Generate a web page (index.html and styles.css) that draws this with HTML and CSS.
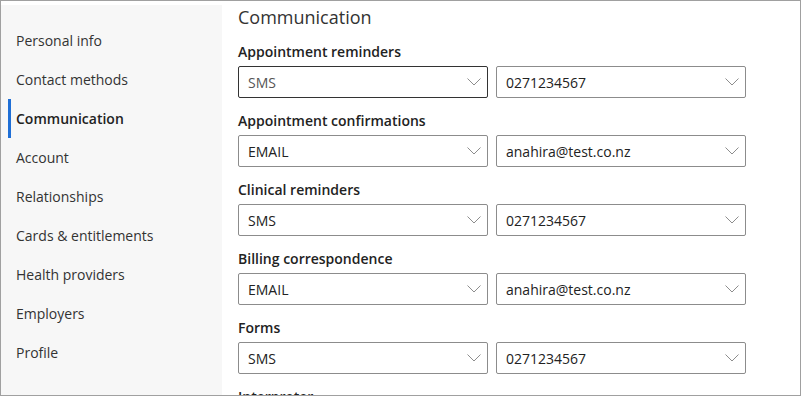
FILE: index.html
```html
<!DOCTYPE html>
<html lang="en">
<head>
<meta charset="utf-8">
<link rel="stylesheet" href="styles.css">
</head>
<body>
<div class="frame">
  <nav class="sidebar">
    <a class="nav-item">Personal info</a>
    <a class="nav-item">Contact methods</a>
    <a class="nav-item active">Communication</a>
    <a class="nav-item">Account</a>
    <a class="nav-item">Relationships</a>
    <a class="nav-item">Cards &amp; entitlements</a>
    <a class="nav-item">Health providers</a>
    <a class="nav-item">Employers</a>
    <a class="nav-item">Profile</a>
  </nav>
  <main class="content">
    <h1 class="title">Communication</h1>

    <div class="field">
      <div class="label">Appointment reminders</div>
      <div class="row">
        <div class="select focused"><span class="muted">SMS</span><svg class="chev" viewBox="0 0 14 8"><path d="M0.5 0.5 L7 7 L13.5 0.5"/></svg></div>
        <div class="select"><span>0271234567</span><svg class="chev" viewBox="0 0 14 8"><path d="M0.5 0.5 L7 7 L13.5 0.5"/></svg></div>
      </div>
    </div>

    <div class="field">
      <div class="label">Appointment confirmations</div>
      <div class="row">
        <div class="select"><span>EMAIL</span><svg class="chev" viewBox="0 0 14 8"><path d="M0.5 0.5 L7 7 L13.5 0.5"/></svg></div>
        <div class="select"><span>anahira@test.co.nz</span><svg class="chev" viewBox="0 0 14 8"><path d="M0.5 0.5 L7 7 L13.5 0.5"/></svg></div>
      </div>
    </div>

    <div class="field">
      <div class="label">Clinical reminders</div>
      <div class="row">
        <div class="select"><span>SMS</span><svg class="chev" viewBox="0 0 14 8"><path d="M0.5 0.5 L7 7 L13.5 0.5"/></svg></div>
        <div class="select"><span>0271234567</span><svg class="chev" viewBox="0 0 14 8"><path d="M0.5 0.5 L7 7 L13.5 0.5"/></svg></div>
      </div>
    </div>

    <div class="field">
      <div class="label">Billing correspondence</div>
      <div class="row">
        <div class="select"><span>EMAIL</span><svg class="chev" viewBox="0 0 14 8"><path d="M0.5 0.5 L7 7 L13.5 0.5"/></svg></div>
        <div class="select"><span>anahira@test.co.nz</span><svg class="chev" viewBox="0 0 14 8"><path d="M0.5 0.5 L7 7 L13.5 0.5"/></svg></div>
      </div>
    </div>

    <div class="field">
      <div class="label">Forms</div>
      <div class="row">
        <div class="select"><span>SMS</span><svg class="chev" viewBox="0 0 14 8"><path d="M0.5 0.5 L7 7 L13.5 0.5"/></svg></div>
        <div class="select"><span>0271234567</span><svg class="chev" viewBox="0 0 14 8"><path d="M0.5 0.5 L7 7 L13.5 0.5"/></svg></div>
      </div>
    </div>

    <div class="field">
      <div class="label">Interpreter</div>
    </div>
  </main>
</div>
</body>
</html>
```

FILE: styles.css
```css
* { box-sizing: border-box; }
html, body {
  margin: 0;
  padding: 0;
  background: #ffffff;
}
body {
  font-family: "Open Sans", "Liberation Sans", sans-serif;
  color: #333333;
}
.frame {
  width: 801px;
  height: 396px;
  border: 1px solid #a0a0a0;
  display: flex;
  overflow: hidden;
}
.sidebar {
  width: 221px;
  flex: none;
  margin-top: 4px;
  background: #f7f7f7;
  padding-top: 16px;
  display: flex;
  flex-direction: column;
}
.nav-item {
  display: flex;
  align-items: center;
  height: 39px;
  margin-left: 7px;
  padding-left: 5px;
  border-left: 3px solid transparent;
  font-size: 14px;
  color: #333333;
}
.nav-item.active {
  border-left-color: #1f6fd6;
  font-weight: 600;
  color: #222222;
}
.content {
  flex: 1;
  padding: 4px 0 0 16px;
}
.title {
  margin: 0 0 13px 0;
  font-size: 18px;
  font-weight: 400;
  line-height: 24px;
  color: #333333;
}
.field {
  margin-bottom: 13px;
}
.label {
  font-size: 14px;
  font-weight: 600;
  line-height: 20px;
  color: #222222;
  margin-bottom: 4px;
}
.row {
  display: flex;
  gap: 8px;
}
.select {
  width: 250px;
  height: 32px;
  border: 1px solid #8c8c8c;
  border-radius: 2px;
  display: flex;
  align-items: center;
  justify-content: space-between;
  padding: 0 6px 0 9px;
  font-size: 14px;
  color: #222222;
}
.select.focused {
  border-color: #333333;
}
.muted {
  color: #555555;
}
.chev {
  width: 14px;
  height: 8px;
  fill: none;
  stroke: #808080;
  stroke-width: 0.9;
}
```
